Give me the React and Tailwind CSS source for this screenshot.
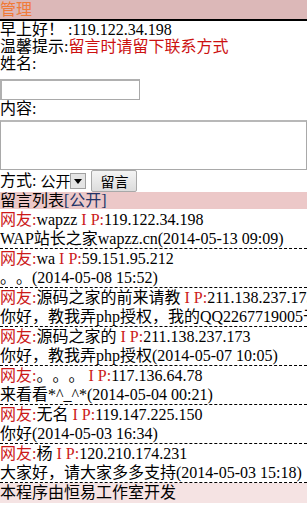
const entries = [
  { name: 'wapzz', ip: '119.122.34.198', body: 'WAP站长之家wapzz.cn', time: '2014-05-13 09:09' },
  { name: 'wa', ip: '59.151.95.212', body: '。。', time: '2014-05-08 15:52' },
  { name: '源码之家的前来请教', ip: '211.138.237.173', body: '你好，教我弄php授权，我的QQ2267719005于', time: null },
  { name: '源码之家的', ip: '211.138.237.173', body: '你好，教我弄php授权', time: '2014-05-07 10:05' },
  { name: '。。。', ip: '117.136.64.78', body: '来看看*^_^*', time: '2014-05-04 00:21' },
  { name: '无名', ip: '119.147.225.150', body: '你好', time: '2014-05-03 16:34' },
  { name: '杨', ip: '120.210.174.231', body: '大家好，请大家多多支持', time: '2014-05-03 15:18' },
];

export default function App() {
  return (
    <div className="w-[307px] h-[506px] overflow-hidden bg-white text-[16px] text-black font-['Liberation_Serif','Noto_Sans_CJK_SC',serif] [text-spacing-trim:space-all]">
      <div className="h-[21px] bg-[#dcb8b8] border-b-2 border-black leading-[19px] text-[#f07a38]">管理</div>

      <div className="leading-[17px]">
        <div>早上好！ :119.122.34.198</div>
        <div>
          温馨提示:<span className="text-[#cc1111]">留言时请留下联系方式</span>
        </div>
        <div>姓名:</div>
      </div>
      <div className="mt-[7px] h-[21px] w-[140px] border border-[#a9a9a9] border-t-2 border-l-2 border-t-[#b0b0b0] border-l-[#b0b0b0] bg-white" />
      <div className="leading-[18px]">内容:</div>
      <div className="mt-[2px] h-[50px] w-full border border-[#a9a9a9] border-t-2 border-t-[#b8b8b8] bg-white" />

      <div className="flex items-center h-[22px] leading-[18px]">
        <span>方式:</span>
        <div className="flex items-center h-[20px] w-[50px] ml-[1px] bg-white">
          <span className="pl-[3px] text-[15px] font-['Noto_Sans_CJK_SC',sans-serif] leading-[18px]">公开</span>
          <div className="ml-auto mr-[1px] flex h-[16px] w-[16px] items-center justify-center border border-[#a0a0a0] bg-[#e4e4e4]">
            <svg width="8" height="5" viewBox="0 0 8 5">
              <path d="M0 0h8L4 5z" fill="#000" />
            </svg>
          </div>
        </div>
        <div className="ml-[4px] flex h-[22px] w-[46px] items-center justify-center rounded-[2px] border border-[#a8a8a8] bg-gradient-to-b from-[#f4f4f4] to-[#dcdcdc] text-[14px] font-['Noto_Sans_CJK_SC',sans-serif]">
          留言
        </div>
      </div>

      <div className="h-[17px] bg-[#ecc8c8] leading-[17px] whitespace-nowrap">
        留言列表<span className="text-[#223366]">[公开]</span>
      </div>

      <div className="pt-[1px]">
        {entries.map((e, i) => (
          <div key={i} className="border-b border-dashed border-black leading-[19px] whitespace-nowrap">
            <div>
              <span className="text-[#cc1a1a]">网友:</span>
              {e.name}
              <span className="text-[#cc1a1a]"> I P:</span>
              {e.ip}
            </div>
            <div>
              {e.body}
              {e.time && `(${e.time})`}
            </div>
          </div>
        ))}
      </div>

      <div className="h-[20px] bg-[#f5e3e3] leading-[20px] whitespace-nowrap">本程序由恒易工作室开发</div>
    </div>
  );
}
